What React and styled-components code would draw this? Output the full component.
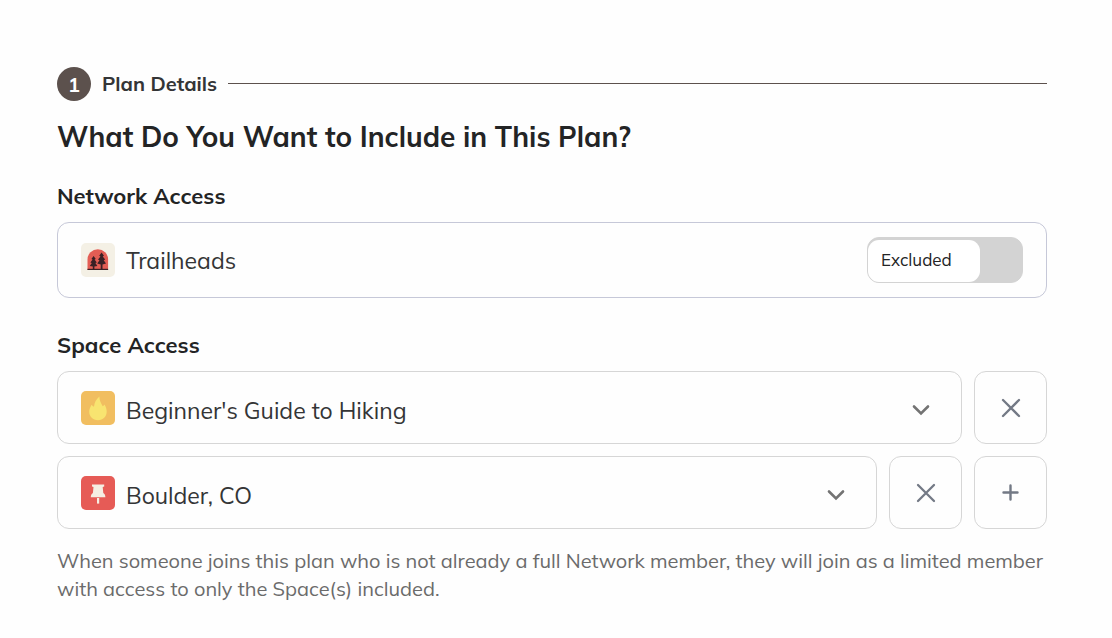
import { useState } from "react";
import styled, { createGlobalStyle } from "styled-components";

const GlobalStyle = createGlobalStyle`
  *, *::before, *::after {
    box-sizing: border-box;
  }

  body {
    margin: 0;
    background: #fefefe;
    color: #232425;
    font-family: "Mulish", "Open Sans", sans-serif;
  }

  button, select, input {
    font-family: inherit;
    color: inherit;
  }
`;

const Page = styled.main`
  padding: 67px 65px 32px 57px;
`;

const StepHeader = styled.div`
  display: flex;
  align-items: center;
  gap: 11px;
`;

const StepNumber = styled.span`
  display: flex;
  align-items: center;
  justify-content: center;
  flex-shrink: 0;
  width: 34px;
  height: 34px;
  border-radius: 50%;
  background: #5c514d;
  color: #ffffff;
  font-size: 20px;
  font-weight: 700;
`;

const StepName = styled.span`
  color: #343536;
  font-size: 20px;
  line-height: 34px;
  font-weight: 700;
  white-space: nowrap;
`;

const StepLine = styled.hr`
  flex: 1;
  height: 1px;
  margin: 0 0 2px;
  border: none;
  background: #5c514d;
`;

const Title = styled.h1`
  margin: 16px 0 25px;
  font-size: 28px;
  line-height: 40px;
  font-weight: 700;
`;

const Section = styled.section`
  margin-bottom: 33px;
`;

const SectionTitle = styled.h2`
  margin: 0 0 12px;
  font-size: 22px;
  line-height: 28px;
  font-weight: 700;
`;

const NetworkCard = styled.div`
  display: flex;
  align-items: center;
  gap: 11px;
  height: 76px;
  padding: 0 23px;
  border: 1px solid #c6c8d8;
  border-radius: 12px;
`;

const NetworkName = styled.label`
  flex: 1;
  color: #343536;
  font-size: 23px;
`;

const Toggle = styled.span`
  position: relative;
  display: flex;
  justify-content: ${(props) => (props.$on ? "flex-end" : "flex-start")};
  width: 156px;
  height: 46px;
  padding-top: 2px;
  border: 1px solid #d3d3d3;
  border-radius: 12px;
  background: #d3d3d3;
`;

const ToggleInput = styled.input`
  position: absolute;
  inset: 0;
  width: 100%;
  height: 100%;
  margin: 0;
  opacity: 0;
  cursor: pointer;
`;

const ToggleKnob = styled.span`
  display: flex;
  align-items: center;
  width: 112px;
  padding: 0 13px 4px;
  border-radius: 11px;
  background: #ffffff;
  font-size: 17px;
`;

const Rows = styled.div`
  display: flex;
  flex-direction: column;
  gap: 12px;
`;

const Row = styled.div`
  display: flex;
  gap: 12px;
`;

const SelectBox = styled.div`
  display: flex;
  align-items: center;
  flex: 1;
  gap: 11px;
  height: 73px;
  padding: 0 30px 0 23px;
  border: 1px solid #d6d6d6;
  border-radius: 12px;
`;

const SpaceSelect = styled.select`
  flex: 1;
  min-width: 0;
  height: 100%;
  padding: 6px 0 0;
  border: none;
  outline: none;
  appearance: none;
  background: transparent;
  color: #343536;
  font-size: 23px;
`;

const Chevron = styled.svg`
  flex-shrink: 0;
  width: 20px;
  height: 24px;
  margin-top: 4px;
`;

const SquareButton = styled.button`
  display: flex;
  align-items: center;
  justify-content: center;
  flex-shrink: 0;
  width: 73px;
  height: 73px;
  padding: 0;
  border: 1px solid #d6d6d6;
  border-radius: 12px;
  background: transparent;
  color: #737985;
  cursor: pointer;
`;

const Tile = styled.svg`
  flex-shrink: 0;
  width: 34px;
  height: 34px;
`;

const Note = styled.p`
  margin: 18px 0 0;
  color: #6b6b6b;
  font-size: 20px;
  line-height: 28px;
`;

function TrailheadsIcon() {
  return (
    <Tile viewBox="0 0 34 34" aria-hidden="true">
      <rect width="34" height="34" rx="5" fill="#f4f0e5" />
      <path d="M6.500 27V16.500a10.300 10.300 0 0 1 20.600 0V27z" fill="#e35d54" />
      <g fill="#3a2025">
        <path d="M12.600 13l2.200 3-1.200.6 2.200 2.800-1.400.6 2 3-3 .6V26h-1.600v-2.400l-3-.6 2-3-1.400-.6 2.200-2.800-1.200-.6z" />
        <path d="M20.600 9.500l2.400 3.300-1.300.6 2.500 3.200-1.500.6 2.300 3.400-3.500.8V26h-1.800v-4.600l-3.500-.8 2.300-3.400-1.500-.6 2.500-3.200-1.300-.6z" />
        <path d="M6.500 25.800h20.600V27H6.500z" />
      </g>
    </Tile>
  );
}

function FlameIcon() {
  return (
    <Tile viewBox="0 0 34 34" aria-hidden="true">
      <rect width="34" height="34" rx="5" fill="#f1be60" />
      <path
        d="M18.400 5.600C18.300 9.500 19.800 12 21.700 15.200C22.600 14.800 23.100 14.200 23.500 13.500C24.900 15.700 25.700 18 25.700 20.600C25.700 25.500 22 29.200 17 29.200S8.200 25.600 8.200 20.800C8.200 18.200 9.200 15.900 10.700 13.700C11.200 14.700 12 15.400 13 15.700C13.400 11.500 15.200 8.300 18.400 5.600Z"
        fill="#f8e470"
      />
    </Tile>
  );
}

function PinIcon() {
  return (
    <Tile viewBox="0 0 34 34" aria-hidden="true">
      <rect width="34" height="34" rx="5" fill="#e65b56" />
      <path
        d="M11 8.400h12.200v2.100l-1.500.6.600 5.900c1.300.8 2 2 2.100 4.200H9.800c.1-2.200.8-3.400 2.100-4.200l.6-5.900-1.500-.6z"
        fill="#f5eee3"
      />
      <path d="M16 22h2.200v5.600H16z" fill="#f5eee3" />
    </Tile>
  );
}

function CloseIcon() {
  return (
    <svg width="20" height="20" viewBox="0 0 20 20" aria-hidden="true">
      <path
        d="M2 2l16 16M18 2L2 18"
        stroke="currentColor"
        strokeWidth="2.300"
        strokeLinecap="round"
      />
    </svg>
  );
}

function PlusIcon() {
  return (
    <svg width="20" height="20" viewBox="0 0 20 20" aria-hidden="true">
      <path
        d="M9.500 2.500v14M2.500 9.500h14"
        stroke="currentColor"
        strokeWidth="2.400"
        strokeLinecap="round"
      />
    </svg>
  );
}

const initialSpaces = [
  { name: "Beginner's Guide to Hiking", icon: FlameIcon },
  { name: "Boulder, CO", icon: PinIcon },
];

function App() {
  const [included, setIncluded] = useState(false);
  const [spaces, setSpaces] = useState(initialSpaces);

  const changeSpace = (index, name) => {
    const next = initialSpaces.find((space) => space.name === name);
    setSpaces(spaces.map((space, i) => (i === index ? next : space)));
  };

  return (
    <>
      <GlobalStyle />
      <Page>
        <StepHeader>
          <StepNumber>1</StepNumber>
          <StepName>Plan Details</StepName>
          <StepLine />
        </StepHeader>
        <Title>What Do You Want to Include in This Plan?</Title>

        <Section>
          <SectionTitle>Network Access</SectionTitle>
          <NetworkCard>
            <TrailheadsIcon />
            <NetworkName htmlFor="network">Trailheads</NetworkName>
            <Toggle $on={included}>
              <ToggleKnob>{included ? "Included" : "Excluded"}</ToggleKnob>
              <ToggleInput
                id="network"
                type="checkbox"
                role="switch"
                checked={included}
                onChange={(e) => setIncluded(e.target.checked)}
              />
            </Toggle>
          </NetworkCard>
        </Section>

        <SectionTitle>Space Access</SectionTitle>
        <Rows>
          {spaces.map((space, index) => (
            <Row key={index}>
              <SelectBox>
                <space.icon />
                <SpaceSelect
                  aria-label={`Space ${index + 1}`}
                  value={space.name}
                  onChange={(e) => changeSpace(index, e.target.value)}
                >
                  {initialSpaces.map(({ name }) => (
                    <option key={name}>{name}</option>
                  ))}
                </SpaceSelect>
                <Chevron viewBox="0 0 20 24" aria-hidden="true">
                  <path
                    d="M3 8.500l7 7 7-7"
                    fill="none"
                    stroke="#737373"
                    strokeWidth="2.600"
                    strokeLinecap="round"
                  />
                </Chevron>
              </SelectBox>
              <SquareButton
                type="button"
                aria-label="Remove space"
                onClick={() => setSpaces(spaces.filter((_, i) => i !== index))}
              >
                <CloseIcon />
              </SquareButton>
              {index === spaces.length - 1 && (
                <SquareButton
                  type="button"
                  aria-label="Add space"
                  onClick={() => setSpaces([...spaces, initialSpaces[0]])}
                >
                  <PlusIcon />
                </SquareButton>
              )}
            </Row>
          ))}
        </Rows>
        <Note>
          When someone joins this plan who is not already a full Network
          member, they will join as a limited member with access to only the
          Space(s) included.
        </Note>
      </Page>
    </>
  );
}

export default App;
